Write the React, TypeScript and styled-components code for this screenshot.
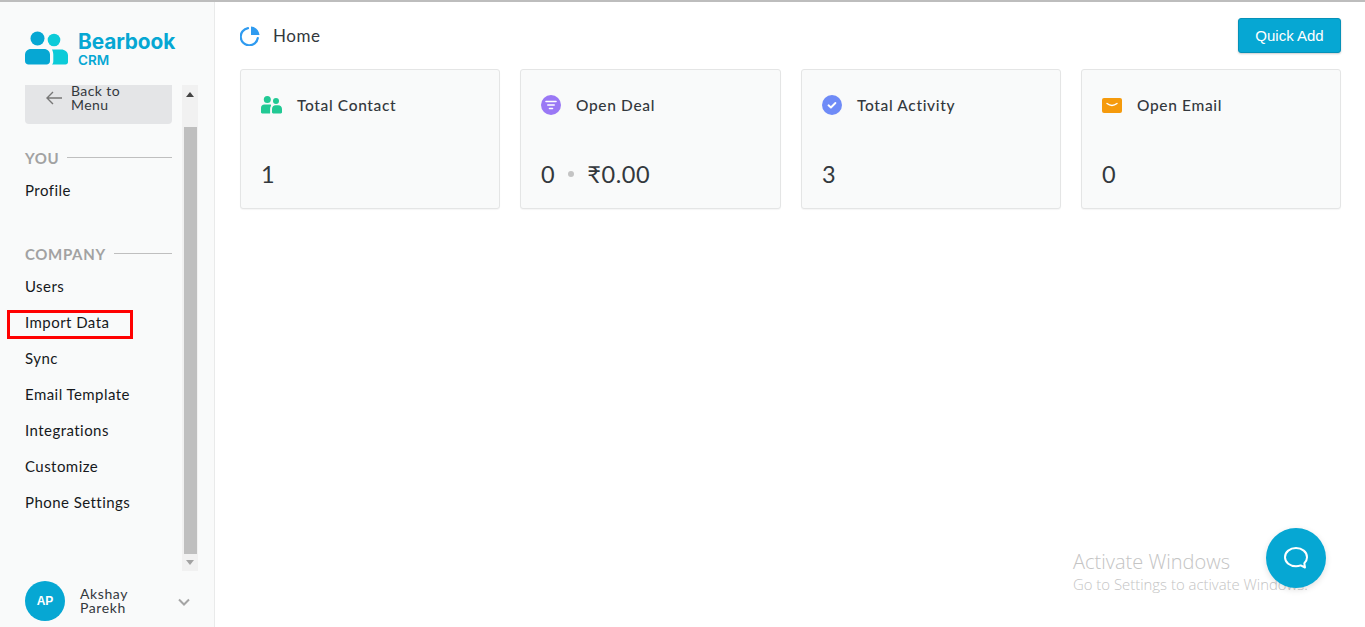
import React from "react";
import styled, { createGlobalStyle } from "styled-components";

const Global = createGlobalStyle`
  html, body { margin: 0; padding: 0; height: 100%; background: #fff; overflow: hidden; }
  #root { height: 100%; }
  * { box-sizing: border-box; }
`;

const Page = styled.div`
  position: relative;
  width: 1365px;
  height: 627px;
  display: flex;
  border-top: 2px solid #bdbdbd;
  font-family: "Lato", "Noto Sans", sans-serif;
  color: #33383d;
  overflow: hidden;
`;

const Sidebar = styled.aside`
  width: 215px;
  height: 625px;
  flex: none;
  background: #f9fafa;
  border-right: 1px solid #e9eaea;
  display: flex;
  flex-direction: column;
`;

const LogoBlock = styled.div`
  height: 83px;
  padding: 29px 0 0 25px;
  display: flex;
  gap: 10px;
  flex: none;
`;

const LogoText = styled.div`
  display: flex;
  flex-direction: column;
  color: #06a7d3;
  font-family: "Inter", "Lato", sans-serif;
`;

const LogoName = styled.span`
  font-size: 20.8px;
  line-height: 21px;
  font-weight: 700;
  letter-spacing: -0.1px;
`;

const LogoSub = styled.span`
  font-size: 13.5px;
  line-height: 16px;
  font-weight: 600;
`;

const ScrollArea = styled.div`
  height: 486px;
  flex: none;
  padding-left: 25px;
  display: flex;
  overflow: hidden;
`;

const Nav = styled.nav`
  width: 147px;
  flex: none;
`;

const BackButton = styled.div`
  height: 39px;
  background: #e4e5e7;
  border-radius: 0 0 4px 4px;
  display: flex;
  align-items: flex-start;
  padding-left: 20px;
  gap: 8px;
  color: #777;
`;

const BackLabel = styled.span`
  color: #33383d;
  font-size: 14px;
  line-height: 14px;
  width: 60px;
  letter-spacing: 0.4px;
  margin-top: -1px;
`;

const SectionTitle = styled.div<{ $top: number }>`
  display: flex;
  align-items: center;
  gap: 8px;
  margin-top: ${(p) => p.$top}px;
  height: 20px;
  font-size: 15px;
  font-weight: 700;
  letter-spacing: 0.65px;
  color: #a2a2a2;
  &::after {
    content: "";
    flex: 1;
    height: 1px;
    background: #bfbfbf;
    margin-bottom: 2px;
  }
`;

const NavList = styled.div<{ $gap: number }>`
  margin-top: ${(p) => p.$gap}px;
`;

const NavItem = styled.div`
  height: 36px;
  line-height: 36px;
  font-size: 15px;
  color: #16191c;
  letter-spacing: 0.45px;
  white-space: nowrap;
`;

const ScrollTrack = styled.div`
  width: 16px;
  margin-left: 10px;
  flex: none;
  background: #f1f1f1;
  display: flex;
  flex-direction: column;
  align-items: center;
`;

const ScrollButton = styled.div`
  height: 42px;
  flex: none;
  display: flex;
  justify-content: center;
  padding-top: 7px;
  &:last-child {
    height: 17px;
    padding-top: 6px;
  }
`;

const ScrollThumb = styled.div`
  width: 13px;
  height: 427px;
  flex: none;
  background: #bfbfbf;
`;

const UserFooter = styled.div`
  flex: 1;
  padding: 10px 0 0 25px;
  display: flex;
  align-items: flex-start;
`;

const Avatar = styled.div`
  width: 40px;
  height: 40px;
  border-radius: 50%;
  background: #06a7d3;
  color: #fff;
  font-size: 12px;
  font-weight: 700;
  font-family: "Liberation Sans", sans-serif;
  display: flex;
  align-items: center;
  justify-content: center;
  flex: none;
`;

const UserName = styled.div`
  width: 70px;
  margin: 6px 0 0 15px;
  font-size: 14px;
  line-height: 14px;
  letter-spacing: 0.6px;
  flex: none;
`;

const UserChevron = styled.div`
  color: #a5a5a5;
  margin-top: 17px;
  margin-left: 28px;
  display: flex;
`;

const Main = styled.main`
  flex: 1;
  padding: 16px 24px 0 25px;
  display: flex;
  flex-direction: column;
`;

const Header = styled.header`
  height: 35px;
  display: flex;
  align-items: center;
  justify-content: space-between;
`;

const TitleGroup = styled.div`
  display: flex;
  align-items: center;
  gap: 13px;
`;

const PageTitle = styled.h1`
  margin: 0;
  font-size: 17px;
  line-height: 22px;
  font-weight: 400;
  letter-spacing: 0.55px;
  padding-top: 1px;
`;

const QuickAdd = styled.button`
  width: 103px;
  height: 35px;
  background: #06a7d3;
  border: 1px solid #0591b8;
  border-radius: 3px;
  color: #fff;
  font-family: "Liberation Sans", sans-serif;
  font-size: 15px;
  padding: 0;
  box-shadow: 0 1px 2px rgba(0, 0, 0, 0.2);
`;

const CardGrid = styled.section`
  margin-top: 16px;
  display: grid;
  grid-template-columns: 260px 261px 260px 260px;
  gap: 20px;
`;

const Card = styled.article`
  height: 140px;
  background: #f9fafa;
  border: 1px solid #e4e5e5;
  border-radius: 3px;
  box-shadow: 0 1px 1px rgba(0, 0, 0, 0.04);
  padding: 25px 20px 0;
  display: flex;
  flex-direction: column;
`;

const CardHead = styled.div`
  height: 20px;
  display: flex;
  align-items: center;
  gap: 15px;
  font-size: 15.5px;
  font-weight: 500;
  letter-spacing: 0.65px;
`;

const CardValue = styled.div`
  margin-top: 42px;
  display: flex;
  align-items: center;
  font-size: 23.5px;
  line-height: 34px;
  letter-spacing: 0.6px;
`;

const Dot = styled.span`
  width: 6px;
  height: 6px;
  border-radius: 50%;
  background: #c4c4c4;
  margin: 0 13px;
`;

const Watermark = styled.div`
  position: absolute;
  left: 1073px;
  top: 548px;
  font-family: "Open Sans", sans-serif;
  font-weight: 300;
  color: #c4c4c4;
  white-space: nowrap;
`;

const WatermarkTitle = styled.div`
  font-size: 20px;
  line-height: 24px;
`;

const WatermarkSub = styled.div`
  font-size: 14.9px;
  line-height: 20px;
`;

const ChatFab = styled.div`
  position: absolute;
  left: 1266px;
  top: 526px;
  width: 60px;
  height: 60px;
  border-radius: 50%;
  background: #06a7d3;
  box-shadow: 0 2px 6px rgba(0, 0, 0, 0.12);
  display: flex;
  align-items: center;
  justify-content: center;
`;

const Annotation = styled.div`
  position: absolute;
  left: 7px;
  top: 308px;
  width: 126px;
  height: 29px;
  border: 3px solid #f00;
  pointer-events: none;
`;

const LogoMark = () => (
  <svg width="43" height="34" viewBox="0 0 43 34" style={{ flex: "none" }}>
    <circle cx="12.5" cy="7.5" r="7" fill="#06a7d3" />
    <circle cx="29" cy="9" r="6.3" fill="#0ccbd8" />
    <path d="M0 24c0-3.500 2.500-6 6-6h13c3.500 0 6 2.500 6 6v6c0 2-1.500 3.500-3.500 3.500H3.500C1.500 33.500 0 32 0 30z" fill="#06a7d3" />
    <path d="M27 18.500h9c4 0 7 2.500 7 6v6.500c0 1.500-1 2.500-2.500 2.500H27c1-1 1.300-2 1.300-3.500V24c0-2-.5-4-1.300-5.500z" fill="#0ccbd8" />
  </svg>
);

const PieIcon = () => (
  <svg width="20" height="20" viewBox="0 0 20 20">
    <path d="M8 2.200A8.600 8.600 0 1 0 17.800 12" fill="none" stroke="#2f9bf0" strokeWidth="2.200" strokeLinecap="round" />
    <path d="M11 0.500c4.500.3 8 3.800 8.500 8.500H11z" fill="#2f9bf0" />
  </svg>
);

const ContactIcon = () => (
  <svg width="21" height="18" viewBox="0 0 21 18">
    <circle cx="6.300" cy="3.600" r="3.500" fill="#22c994" />
    <circle cx="15" cy="5" r="3" fill="#22c994" />
    <path d="M0 12c0-2 1.300-3.400 3.400-3.400h5.500c1 0 1.400.5 1 1.300-.6 1-.8 1.900-.8 3v4.500H1.200C.5 17.400 0 16.900 0 16.200z" fill="#22c994" />
    <path d="M11 13c0-2.200 1.500-3.700 3.600-3.700h2.600c2.200 0 3.800 1.500 3.800 3.700v3.200c0 .7-.5 1.200-1.200 1.200h-7.600c-.7 0-1.200-.5-1.200-1.200z" fill="#22c994" />
  </svg>
);

const DealIcon = () => (
  <svg width="20" height="20" viewBox="0 0 20 20">
    <circle cx="10" cy="10" r="10" fill="#9a78f5" />
    <path d="M5 6.500h10M6.800 10h6.400M8.500 13.500h3" stroke="#fff" strokeWidth="1.600" strokeLinecap="round" />
  </svg>
);

const ActivityIcon = () => (
  <svg width="20" height="20" viewBox="0 0 20 20">
    <circle cx="10" cy="10" r="10" fill="#6f8bf7" />
    <path d="M6.500 10.300l2.400 2.200 4.500-4.500" fill="none" stroke="#fff" strokeWidth="1.900" strokeLinecap="round" strokeLinejoin="round" />
  </svg>
);

const EmailIcon = () => (
  <svg width="20" height="15" viewBox="0 0 20 15">
    <rect width="20" height="15" rx="2" fill="#f59a0c" />
    <path d="M5 5.500c3 2.300 7 2.300 10 0" fill="none" stroke="#fff" strokeWidth="1.400" strokeLinecap="round" />
  </svg>
);

const Back = () => (
  <svg width="18" height="14" viewBox="0 0 18 14" style={{ marginTop: 6, flex: "none" }}>
    <path d="M17 7H2M8 1L2 7l6 6" fill="none" stroke="currentColor" strokeWidth="1.400" />
  </svg>
);

const Chat = () => (
  <svg width="26" height="24" viewBox="0 0 26 24">
    <path
      d="M13 2c6 0 11 3.900 11 9.200 0 2.500-1 4.500-2.700 6l.7 4.300-4.300-2.100c-1.400.5-3 .8-4.700.8-6 0-11-3.700-11-9S7 2 13 2z"
      fill="none"
      stroke="#fff"
      strokeWidth="2"
      strokeLinejoin="round"
    />
  </svg>
);

const Arrow = ({ dir, color }: { dir: "up" | "down"; color: string }) => (
  <svg width="8" height="5" viewBox="0 0 8 5">
    <path d={dir === "up" ? "M4 0l4 5H0z" : "M0 0h8L4 5z"} fill={color} />
  </svg>
);

const cards = [
  { label: "Total Contact", icon: <ContactIcon />, value: "1" },
  { label: "Open Deal", icon: <DealIcon />, value: "0", extra: "₹0.00" },
  { label: "Total Activity", icon: <ActivityIcon />, value: "3" },
  { label: "Open Email", icon: <EmailIcon />, value: "0" },
];

const company = ["Users", "Import Data", "Sync", "Email Template", "Integrations", "Customize", "Phone Settings"];

export default function App() {
  return (
    <>
      <Global />
      <Page>
        <Sidebar>
          <LogoBlock>
            <LogoMark />
            <LogoText>
              <LogoName>Bearbook</LogoName>
              <LogoSub>CRM</LogoSub>
            </LogoText>
          </LogoBlock>
          <ScrollArea>
            <Nav>
              <BackButton>
                <Back />
                <BackLabel>Back to Menu</BackLabel>
              </BackButton>
              <SectionTitle $top={24}>YOU</SectionTitle>
              <NavList $gap={4}>
                <NavItem>Profile</NavItem>
              </NavList>
              <SectionTitle $top={36}>COMPANY</SectionTitle>
              <NavList $gap={4}>
                {company.map((c) => (
                  <NavItem key={c}>{c}</NavItem>
                ))}
              </NavList>
            </Nav>
            <ScrollTrack>
              <ScrollButton>
                <Arrow dir="up" color="#444" />
              </ScrollButton>
              <ScrollThumb />
              <ScrollButton>
                <Arrow dir="down" color="#a3a3a3" />
              </ScrollButton>
            </ScrollTrack>
          </ScrollArea>
          <UserFooter>
            <Avatar>AP</Avatar>
            <UserName>Akshay Parekh</UserName>
            <UserChevron>
              <svg width="12" height="8" viewBox="0 0 12 8">
                <path d="M1 1.500l5 5 5-5" fill="none" stroke="currentColor" strokeWidth="2" />
              </svg>
            </UserChevron>
          </UserFooter>
        </Sidebar>
        <Main>
          <Header>
            <TitleGroup>
              <PieIcon />
              <PageTitle>Home</PageTitle>
            </TitleGroup>
            <QuickAdd>Quick Add</QuickAdd>
          </Header>
          <CardGrid>
            {cards.map((c) => (
              <Card key={c.label}>
                <CardHead>
                  {c.icon}
                  {c.label}
                </CardHead>
                <CardValue>
                  {c.value}
                  {c.extra && <Dot />}
                  {c.extra}
                </CardValue>
              </Card>
            ))}
          </CardGrid>
        </Main>
        <Watermark>
          <WatermarkTitle>Activate Windows</WatermarkTitle>
          <WatermarkSub>Go to Settings to activate Windows.</WatermarkSub>
        </Watermark>
        <ChatFab>
          <Chat />
        </ChatFab>
        <Annotation />
      </Page>
    </>
  );
}
